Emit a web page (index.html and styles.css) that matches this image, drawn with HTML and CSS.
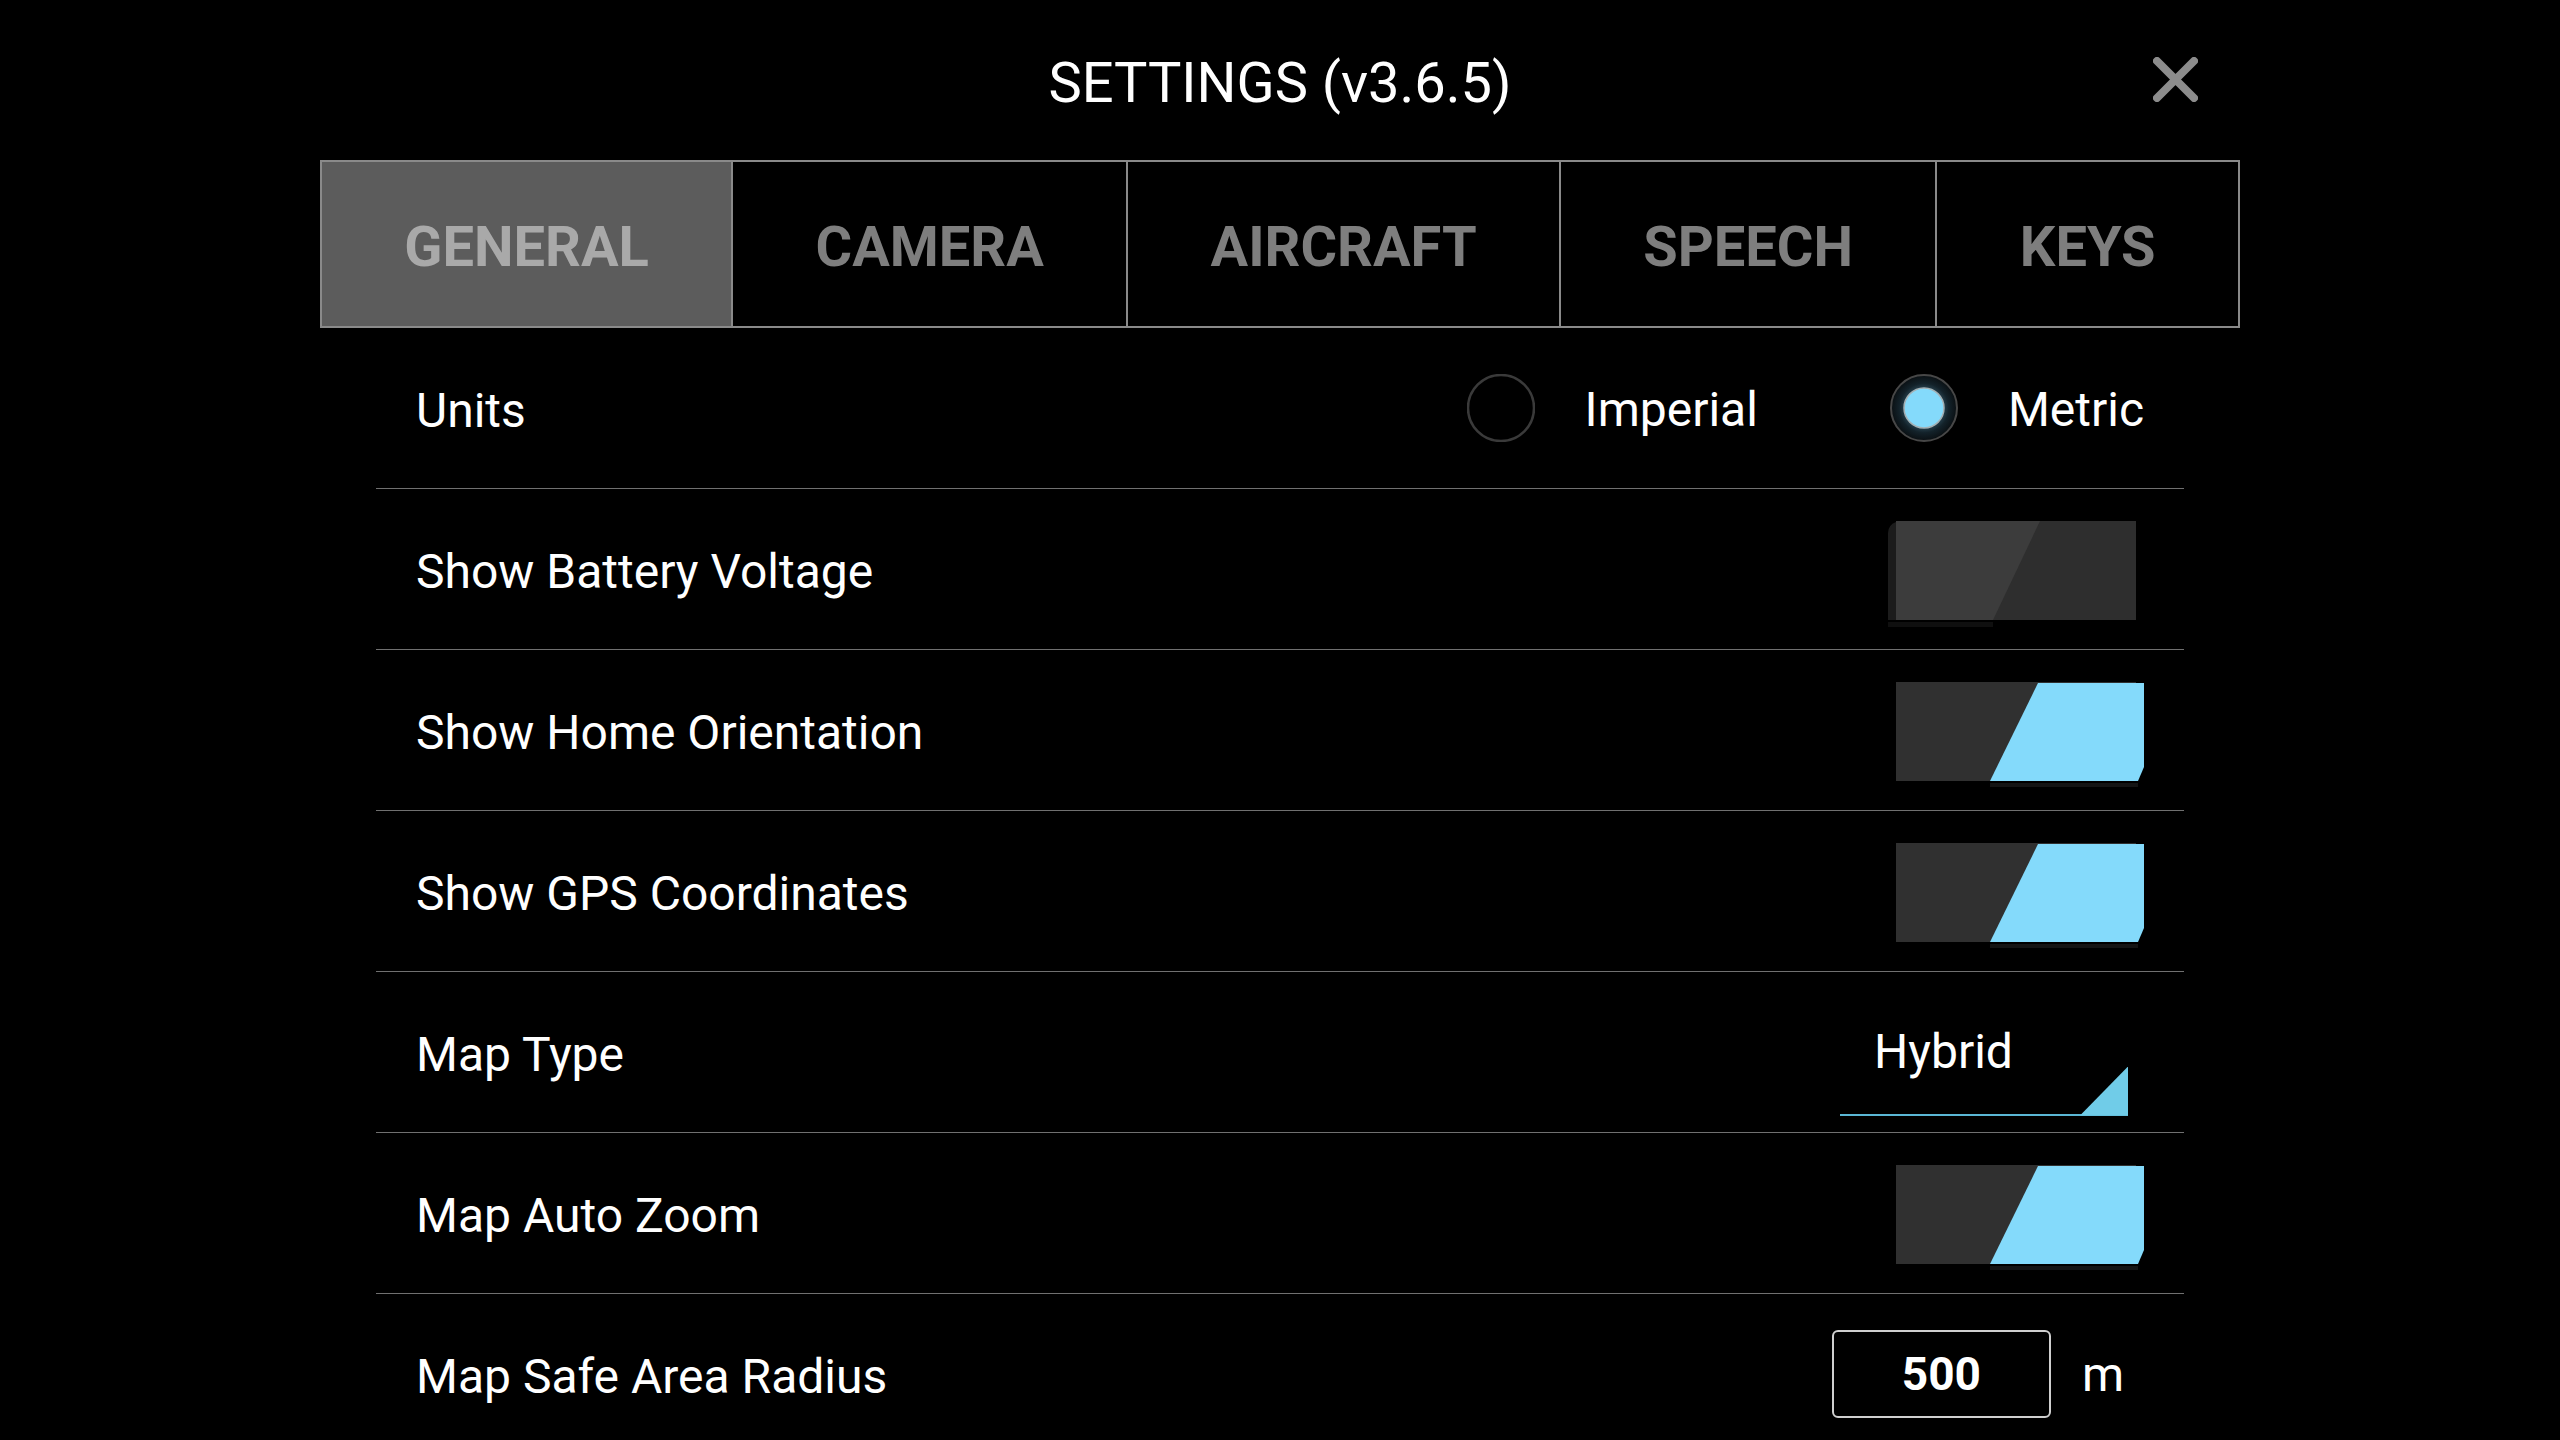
FILE: index.html
```html
<!DOCTYPE html>
<html>
<head>
<meta charset="utf-8">
<title>Settings</title>
<link rel="stylesheet" href="styles.css">
</head>
<body>
<div class="page">
  <header class="header">
    <div class="header-spacer"></div>
    <h1 class="title">SETTINGS (v3.6.5)</h1>
    <button class="close" aria-label="Close">
      <svg width="45" height="45" viewBox="0 0 45 45"><path d="M4 4 L41 41 M41 4 L4 41" stroke="#8c8c8c" stroke-width="8" stroke-linecap="round" fill="none"/></svg>
    </button>
  </header>

  <nav class="tabs">
    <div class="tab tab--active">GENERAL</div>
    <div class="tab">CAMERA</div>
    <div class="tab">AIRCRAFT</div>
    <div class="tab">SPEECH</div>
    <div class="tab">KEYS</div>
  </nav>

  <div class="list">
    <div class="row">
      <span class="label">Units</span>
      <div class="radio-group">
        <div class="radio-option">
          <svg class="radio" width="68" height="68" viewBox="0 0 68 68"><circle cx="34" cy="34" r="33" fill="none" stroke="#3a3a3a" stroke-width="2.5"/></svg>
          <span class="radio-text">Imperial</span>
        </div>
        <div class="radio-option radio-option--gap">
          <svg class="radio" width="68" height="68" viewBox="0 0 68 68">
            <defs>
              <radialGradient id="glow" cx="50%" cy="50%" r="50%">
                <stop offset="0.55" stop-color="#2c4856"/>
                <stop offset="0.75" stop-color="#13222a"/>
                <stop offset="1" stop-color="#0a0f12"/>
              </radialGradient>
            </defs>
            <circle cx="34" cy="34" r="33" fill="url(#glow)" stroke="#474747" stroke-width="2"/>
            <circle cx="34" cy="34" r="20" fill="#84dafb" stroke="#a4b0b4" stroke-width="1.5"/>
          </svg>
          <span class="radio-text">Metric</span>
        </div>
      </div>
    </div>

    <div class="row">
      <span class="label">Show Battery Voltage</span>
      <svg class="toggle" width="256" height="110" viewBox="0 0 256 110">
        <path d="M0 16 Q0 8 8 5 L8 103 L0 103 Z" fill="#1c1c1c"/>
        <rect x="0" y="105" width="105" height="5" fill="#0f0f0f"/>
        <rect x="8" y="4" width="240" height="99" fill="#2e2e2e"/>
        <polygon points="8,4 152,4 105,103 8,103" fill="#3c3c3c"/>
      </svg>
    </div>

    <div class="row">
      <span class="label">Show Home Orientation</span>
      <svg class="toggle" width="256" height="110" viewBox="0 0 256 110">
        <rect x="8" y="4" width="240" height="99" fill="#303030"/>
        <rect x="102" y="105" width="148" height="4" fill="#141414"/>
        <polygon points="150,5 256,5 256,89 250,103 102,103" fill="#84dafb"/>
      </svg>
    </div>

    <div class="row">
      <span class="label">Show GPS Coordinates</span>
      <svg class="toggle" width="256" height="110" viewBox="0 0 256 110">
        <rect x="8" y="4" width="240" height="99" fill="#303030"/>
        <rect x="102" y="105" width="148" height="4" fill="#141414"/>
        <polygon points="150,5 256,5 256,89 250,103 102,103" fill="#84dafb"/>
      </svg>
    </div>

    <div class="row">
      <span class="label">Map Type</span>
      <div class="spinner">Hybrid</div>
    </div>

    <div class="row">
      <span class="label">Map Auto Zoom</span>
      <svg class="toggle" width="256" height="110" viewBox="0 0 256 110">
        <rect x="8" y="4" width="240" height="99" fill="#303030"/>
        <rect x="102" y="105" width="148" height="4" fill="#141414"/>
        <polygon points="150,5 256,5 256,89 250,103 102,103" fill="#84dafb"/>
      </svg>
    </div>

    <div class="row">
      <span class="label">Map Safe Area Radius</span>
      <div class="num-group">
        <div class="num-input">500</div>
        <span class="unit">m</span>
      </div>
    </div>
  </div>
</div>
</body>
</html>
```

FILE: styles.css
```css
html, body {
  margin: 0;
  padding: 0;
  background: #000;
  height: 1440px;
  overflow: hidden;
}

body {
  font-family: Roboto, "Noto Sans", sans-serif;
  color: #fff;
}

.page {
  width: 1920px;
  margin: 0 auto;
}

.header {
  display: grid;
  grid-template-columns: 1fr auto 1fr;
  align-items: start;
  height: 160px;
}

.title {
  margin: 0;
  padding-top: 51px;
  font-weight: 400;
  font-size: 56px;
  line-height: 64px;
  color: #fff;
  letter-spacing: 0;
}

.close {
  justify-self: end;
  margin: 57px 42px 0 0;
  padding: 0;
  border: 0;
  background: none;
  width: 45px;
  height: 45px;
}

.close svg {
  display: block;
}

.tabs {
  display: flex;
  height: 168px;
  box-sizing: border-box;
  border: 2px solid #8a8a8a;
}

.tab {
  flex: 1 1 auto;
  display: flex;
  align-items: center;
  justify-content: center;
  padding: 6px 82px 0;
  font-weight: 700;
  font-size: 56px;
  color: #7e7e7e;
  border-left: 2px solid #8a8a8a;
}

.tab:first-child {
  border-left: 0;
}

.tab--active {
  background: #5c5c5c;
  color: #a9a9a9;
}

.list {
  margin: 0 56px;
}

.row {
  display: flex;
  align-items: center;
  justify-content: space-between;
  height: 160px;
  padding: 0 40px;
  border-bottom: 1px solid #707070;
}

.label {
  padding-top: 5px;
  font-size: 48px;
  line-height: 56px;
  color: #fff;
}

.radio-group {
  display: flex;
  align-items: center;
}

.radio-option {
  display: flex;
  align-items: center;
}

.radio-option--gap {
  margin-left: 132px;
}

.radio {
  display: block;
  margin-right: 50px;
}

.radio-text {
  padding-top: 4px;
  font-size: 48px;
  line-height: 56px;
}

.toggle {
  display: block;
  margin-top: 6px;
}

.spinner {
  position: relative;
  width: 254px;
  margin: 35px 16px 0 0;
  padding: 0 0 34px 34px;
  font-size: 48px;
  line-height: 56px;
  border-bottom: 2px solid #5ab6d4;
}

.spinner::after {
  content: "";
  position: absolute;
  right: 0;
  bottom: -2px;
  width: 48px;
  height: 49px;
  background: #70cce8;
  clip-path: polygon(100% 0, 100% 100%, 0 100%);
}

.num-group {
  display: flex;
  align-items: center;
}

.num-input {
  display: flex;
  align-items: center;
  justify-content: center;
  width: 215px;
  height: 84px;
  border: 2px solid #cfcfcf;
  border-radius: 6px;
  font-weight: 700;
  font-size: 46px;
}

.unit {
  margin-left: 31px;
  margin-right: 20px;
  padding-top: 2px;
  font-size: 48px;
  line-height: 56px;
}
```
